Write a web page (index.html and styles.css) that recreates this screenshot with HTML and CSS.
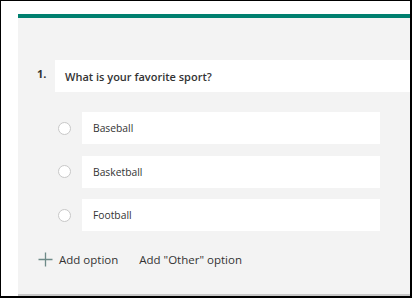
FILE: index.html
```html
<!DOCTYPE html>
<html>
<head>
<meta charset="utf-8">
<link rel="stylesheet" href="styles.css">
</head>
<body>
<div class="frame">
  <div class="panel">
    <div class="question">
      <span class="qnum">1.</span>
      <div class="qbox">What is your favorite sport?</div>
    </div>
    <div class="options">
      <div class="option"><span class="radio"></span><div class="obox">Baseball</div></div>
      <div class="option"><span class="radio"></span><div class="obox">Basketball</div></div>
      <div class="option"><span class="radio"></span><div class="obox">Football</div></div>
    </div>
    <div class="adds">
      <span class="add">
        <svg class="plus" width="15" height="15" viewBox="0 0 15 15"><path d="M7.5 0.5v14M0.5 7.5h14" stroke="#6e8a88" stroke-width="1.3" fill="none"/></svg>
        Add option
      </span>
      <span class="add other">Add "Other" option</span>
    </div>
    <div class="divider"></div>
  </div>
</div>
</body>
</html>
```
FILE: styles.css
```css
* { box-sizing: border-box; }
html, body { margin: 0; padding: 0; }
body {
  font-family: "Open Sans", "Noto Sans", sans-serif;
  color: #333;
  background: #fff;
}
.frame {
  width: 412px;
  height: 298px;
  border-style: solid;
  border-color: #000;
  border-width: 1px 2px 2px 1px;
  background: #fff;
  padding: 13px 0 0 17px;
  display: flex;
}
.panel {
  flex: 1;
  background: #f3f3f3;
  border-top: 4px solid #00806f;
  padding-top: 42px;
  display: flex;
  flex-direction: column;
}
.question {
  display: flex;
  align-items: flex-start;
  height: 32px;
}
.qnum {
  width: 37px;
  padding-left: 19px;
  padding-top: 6px;
  font-size: 11px;
  font-weight: 700;
  color: #333;
}
.qbox {
  flex: 1;
  height: 32px;
  background: #fff;
  display: flex;
  align-items: center;
  padding-left: 10px;
  font-size: 11px;
  font-weight: 600;
  color: #333;
}
.options {
  margin-top: 20px;
  display: flex;
  flex-direction: column;
  gap: 11.5px;
  padding-left: 40px;
  padding-right: 30px;
}
.option {
  display: flex;
  align-items: center;
  height: 32px;
}
.radio {
  width: 13px;
  height: 13px;
  border: 1px solid #c8c8c8;
  border-radius: 50%;
  background: #fff;
  margin-right: 11px;
}
.obox {
  flex: 1;
  height: 32px;
  background: #fff;
  display: flex;
  align-items: center;
  padding-left: 11px;
  font-size: 10.3px;
  color: #333;
}
.adds {
  margin-top: 19px;
  display: flex;
  align-items: center;
  height: 18px;
  padding-left: 20px;
  font-size: 11.5px;
  color: #333;
}
.add {
  display: flex;
  align-items: center;
}
.plus { margin-right: 6px; }
.other { margin-left: 21px; }
.divider {
  margin-top: 26px;
  height: 2px;
  background: #c8c8c8;
}
```
